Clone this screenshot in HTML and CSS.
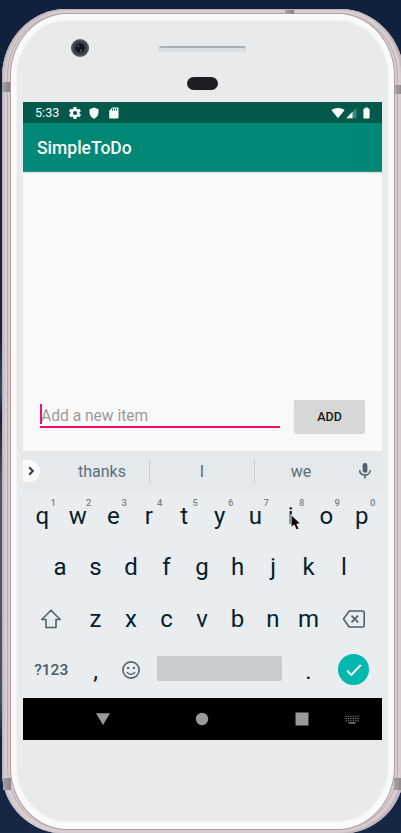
FILE: index.html
```html
<!DOCTYPE html>
<html lang="en">
<head>
<meta charset="utf-8">
<title>SimpleToDo</title>
<link rel="stylesheet" href="styles.css">
</head>
<body>
<div class="phone">
  <i class="band band-top"></i><i class="band band-l1"></i><i class="band band-r1"></i><i class="band band-l2"></i><i class="band band-r2"></i>
  <div class="rim">
  <div class="face">
    <div class="forehead">
      <svg class="camera" width="20" height="20" viewBox="0 0 20 20"><circle cx="10" cy="10" r="9" fill="#50535b"/><circle cx="10" cy="10" r="7" fill="#393c44"/><circle cx="10" cy="10" r="4.6" fill="#111419"/><circle cx="8.4" cy="8.2" r="1.3" fill="#343c49"/><path d="M10 11.5l2 .5-1 2.5z" fill="#77763a"/></svg>
      <div class="speaker"></div>
      <div class="sensor"></div>
    </div>
    <main class="screen">
      <div class="status">
        <span class="time">5:33</span>
        <svg class="s-gear" width="12" height="12" viewBox="2 2 20 20" fill="#fafafa"><path d="M19.4 13c0-.3.1-.7.1-1s0-.7-.1-1l2.1-1.7c.2-.1.2-.4.1-.6l-2-3.5c-.1-.2-.4-.3-.6-.2l-2.5 1a7 7 0 0 0-1.7-1l-.4-2.6c0-.3-.2-.4-.5-.4h-4c-.2 0-.4.1-.5.4L9 5a7 7 0 0 0-1.6 1L4.900 5c-.2-.1-.5 0-.6.2l-2 3.500c-.1.2-.1.500.1.600L4.500 11a8 8 0 0 0 0 2l-2.100 1.700c-.2.100-.2.400-.1.600l2 3.500c.1.200.4.300.6.200l2.500-1c.5.400 1.100.700 1.700 1l.4 2.600c0 .300.200.400.500.400h4c.2 0 .4-.1.500-.4l.4-2.600a7 7 0 0 0 1.700-1l2.500 1c.2.100.5 0 .6-.2l2-3.500c.1-.2.100-.5-.1-.6zM12 15.500a3.500 3.500 0 1 1 0-7 3.500 3.500 0 0 1 0 7z"/></svg>
        <svg class="s-shield" width="10" height="12" viewBox="0 0 10 12"><path d="M5 .4l4.500 1.800v3.300C9.500 8.400 7.600 10.800 5 11.700 2.400 10.800.500 8.400.500 5.500V2.200z" fill="#fafafa"/></svg>
        <svg class="s-card" width="10" height="12" viewBox="0 0 10 12"><path d="M3.300.5h5.200c.6 0 1 .4 1 1v9c0 .6-.4 1-1 1h-7.500c-.5 0-.8-.4-.8-1V3.700z" fill="#fafafa"/><path d="M3.500 1.500v2M5.500 1.500v2M7.500 1.500v2" stroke="#00594a"/></svg>
        <svg class="s-wifi" width="14" height="12" viewBox="0 0 14 12"><path d="M7 11.200L.3 3.100C4 .3 10 .3 13.700 3.100z" fill="#fafafa"/></svg>
        <svg class="s-cell" width="11" height="12" viewBox="0 0 11 12"><path d="M10.500.7v10.500H.3z" fill="#33897b"/><path d="M6.500 4.800v6.400H.3z" fill="#fafafa"/></svg>
        <svg class="s-batt" width="7" height="12" viewBox="0 0 7 12"><path d="M2.200.5h2.600v1h1c.5 0 .8.300.8.700v8.600c0 .4-.3.700-.8.700H1.200c-.4 0-.8-.3-.8-.7V2.200c0-.4.4-.7.800-.7h1z" fill="#fafafa"/></svg>
      </div>
      <header class="appbar">SimpleToDo</header>
      <section class="content">
        <div class="form">
          <div class="field"><span class="caret"></span>Add a new item</div>
          <button class="add">ADD</button>
        </div>
      </section>
      <div class="suggest">
        <span class="more"><svg width="18" height="22" viewBox="0 0 18 22"><path d="M6.500 7l4 4-4 4" fill="none" stroke="#263c47" stroke-width="2"/></svg></span>
        <span class="word w1">thanks</span>
        <span class="word w2">I</span>
        <span class="word w3">we</span>
        <svg class="mic" width="14" height="18" viewBox="0 0 14 18"><rect x="4.600" y="1" width="4.800" height="9.800" rx="2.400" fill="#4b606c"/><path d="M1.700 8c0 3.100 2.200 5 5.300 5s5.300-1.900 5.300-5M7 13v3.500" fill="none" stroke="#4b606c" stroke-width="1.500"/></svg>
      </div>
      <div class="keyboard">
        <div class="row r1">
          <span>q<sup>1</sup></span><span>w<sup>2</sup></span><span>e<sup>3</sup></span><span>r<sup>4</sup></span><span>t<sup>5</sup></span><span>y<sup>6</sup></span><span>u<sup>7</sup></span><span>i<sup>8</sup>
            <svg class="cursor" width="14" height="20" viewBox="0 0 14 20"><path d="M2 1.500v13.200l3-2.700 2.400 5 2.800-1.300L7.900 11H12z" fill="#0b0b0b" stroke="#fff" stroke-width="1"/></svg></span><span>o<sup>9</sup></span><span>p<sup>0</sup></span>
        </div>
        <div class="row r2"><span>a</span><span>s</span><span>d</span><span>f</span><span>g</span><span>h</span><span>j</span><span>k</span><span>l</span></div>
        <div class="row r3">
          <span><svg width="22" height="22" viewBox="0 0 22 22"><path d="M11 2.200L1.800 11.500h4.200v8h10v-8h4.200z" fill="none" stroke="#4e626d" stroke-width="1.600" stroke-linejoin="round"/></svg></span>
          <span>z</span><span>x</span><span>c</span><span>v</span><span>b</span><span>n</span><span>m</span>
          <span><svg class="del" width="24" height="20" viewBox="0 0 24 20"><path d="M7.200 2h13.600c.8 0 1.400.6 1.400 1.400v13.200c0 .8-.6 1.400-1.400 1.400H7.200L1.500 10z" fill="none" stroke="#4e626d" stroke-width="1.600" stroke-linejoin="round"/><path d="M9.500 6.700l6.600 6.600M16.100 6.700l-6.600 6.600" stroke="#4e626d" stroke-width="1.700"/></svg></span>
        </div>
        <div class="row r4">
          <span class="sym">?123</span><span class="punct">,</span>
          <span><svg width="20" height="20" viewBox="0 0 20 20"><circle cx="10" cy="10" r="8.100" fill="none" stroke="#4e626d" stroke-width="1.600"/><circle cx="7.100" cy="7.900" r="1.200" fill="#4e626d"/><circle cx="12.900" cy="7.900" r="1.200" fill="#4e626d"/><path d="M5.900 12c1.700 3 6.500 3 8.200 0" fill="none" stroke="#4e626d" stroke-width="1.500"/></svg></span>
          <span class="space"></span><span class="punct">.</span>
          <span class="done"><svg width="18" height="16" viewBox="0 0 18 16"><path d="M2 8.500l4.300 4.300L15.800 3" fill="none" stroke="#fff" stroke-width="1.900"/></svg></span>
        </div>
      </div>
      <nav class="nav">
        <svg width="16" height="14" viewBox="0 0 16 14"><path d="M1 1.200h14L8 13z" fill="#999"/></svg>
        <svg class="n-home" width="14" height="14" viewBox="0 0 14 14"><circle cx="7" cy="7" r="6.200" fill="#999"/></svg>
        <svg class="n-recent" width="14" height="14" viewBox="0 0 14 14"><rect x=".5" y=".5" width="13" height="13" rx=".6" fill="#999"/></svg>
        <svg class="n-ime" width="14" height="9" viewBox="0 0 14 9"><path d="M.5 1.200h13.500M.5 3.500h13.500M.5 5.700h13.500" stroke="#999" stroke-width="1.100" stroke-dasharray="1.200 1.200"/><path d="M3.500 7.900h7" stroke="#999" stroke-width="1.200"/></svg>
      </nav>
    </main>
  </div>
  </div>
</div>
</body>
</html>
```
FILE: styles.css
```css
* { box-sizing: border-box; }
html { overflow: hidden; }
body {
  margin: 0;
  width: 401px;
  height: 833px;
  padding: 9px 0 0 2px;
  overflow: hidden;
  font-family: Roboto, "Liberation Sans", sans-serif;
  background: linear-gradient(#11203c 0 40%, #34496a 47%, #14233f 50%, #46566f 58%, #42546b 84%, #0f2342 89%, #172746);
}
.phone {
  position: relative;
  width: 402px;
  height: 825px;
  padding: 5px 10px 5px 9px;
  border-radius: 64px 64px 64px 64px / 68px 68px 62px 62px;
  background: #d8cdd0;
  box-shadow: inset 1px 1px 0 #b9b1b5, inset 3px 1px 1px #cec4c8, inset -3px -1px 1px #c0b6ba;
}
.rim {
  height: 815px;
  border-radius: 56px / 62px;
  background: #fafafb;
  box-shadow: 0 0 0 1px #aaa0a5, -3px 0 0 0 #d8cdd1, 3px 0 0 0 #d8cdd1, -4px 0 0 0 #b9adb2, 4px 0 0 0 #b9adb2;
  padding: 7px 6px 8px;
}
.face {
  height: 800px;
  border-radius: 50px / 56px;
  background: #e8eaec;
  box-shadow: 0 0 2px 1px #eff1f2;
  padding: 0 6px;
}
.forehead {
  position: relative;
  height: 81px;
  display: flex;
  flex-direction: column;
  align-items: center;
  padding-top: 25px;
}
.camera { position: absolute; left: 47px; top: 17px; }
.speaker {
  width: 87px;
  height: 6px;
  border-top: 2px solid #a7b0b7;
  border-radius: 3px 3px 1px 1px;
  background: #dbdfe2;
}
.sensor { width: 31px; height: 13px; margin-top: 25px; border-radius: 7px; background: #1e1d21; }
.band { position: absolute; background: linear-gradient(90deg, #aaa3a5, #878284); }
.band-top { left: 283px; top: 1px; width: 9px; height: 4px; }
.band-l1 { left: 0; top: 73px; width: 8px; height: 10px; }
.band-r1 { left: 393px; top: 76px; width: 8px; height: 9px; }
.band-l2 { left: 1px; top: 769px; width: 8px; height: 12px; }
.band-r2 { left: 392px; top: 769px; width: 9px; height: 12px; }
.screen { width: 359px; display: flex; flex-direction: column; }
.status { height: 21px; background: #00594a; display: flex; align-items: center; padding: 1px 12px 0 12px; }
.time { width: 34px; font-size: 12.600px; line-height: 20px; color: #fafafa; }
.s-shield { margin-left: 8px; }
.s-card { margin-left: 10px; }
.s-wifi { margin-left: auto; }
.s-cell { margin-left: 1px; }
.s-batt { margin-left: 6px; }
.appbar { height: 49px; background: #008877; border-bottom: 1px solid #27937f; color: #fafafa; font-size: 17.500px; font-weight: 500; line-height: 51px; padding-left: 14px; }
.content { height: 279px; background: #f9f9f9; display: flex; flex-direction: column; justify-content: flex-end; box-shadow: inset 0 2px 1px -1px #d8d8d8; }
.form { display: flex; height: 51px; padding: 0 17px; }
.field { position: relative; width: 240px; height: 28px; border-bottom: 2px solid #e4156b; color: #9c9c9c; font-size: 15.600px; line-height: 32px; padding-left: 1px; }
.caret { position: absolute; left: 0; top: 4px; width: 2px; height: 20px; background: #e4156b; }
.add { width: 71px; height: 33px; margin-left: 14px; padding: 0; border: 0; border-radius: 2px; background: #d6d8d7; box-shadow: 0 1px 1px #dcd4d6; color: #151515; font: 500 12.500px/33px Roboto, sans-serif; }
.suggest { height: 40px; background: #e6e9eb; display: flex; align-items: center; color: #5b6e79; font-size: 16px; }
.more { width: 17px; height: 22px; background: #fafafa; border-radius: 0 11px 11px 0; display: flex; }
.word { text-align: center; line-height: 22px; padding-top: 2px; }
.w1 { width: 110px; padding-left: 14px; margin-right: -1px; }
.w2 { width: 106px; border-left: 1px solid #c9d1d5; border-right: 1px solid #c9d1d5; }
.w3 { width: 92px; }
.mic { margin-left: 11px; }
.keyboard { height: 207px; background: #e9edf0; color: #05202b; font-size: 24px; padding-right: 1px; }
.row { display: grid; justify-content: center; grid-auto-flow: column; grid-auto-columns: 35.500px; }
.row > span { position: relative; display: flex; align-items: center; justify-content: center; }
.r1 { height: 49px; }
.r2 { height: 53px; }
.r3 { height: 51px; grid-template-columns: 53px repeat(7, 35.500px) 53px; }
.r4 { height: 52px; grid-template-columns: 53px 35.500px 35.500px 142px 35.500px 53px; }
sup { position: absolute; left: 26px; top: 6px; color: #78858c; font-size: 9.500px; font-weight: 500; line-height: 11px; }
.cursor { position: absolute; left: 16px; top: 22px; }
.del { margin-left: 2px; margin-top: 1px; }
.sym { color: #465a65; font-size: 15.500px; font-weight: 500; }
.row .punct { padding-top: 2px; }
.row .space { width: 125px; height: 25px; margin: 12px auto auto; border-radius: 2px; background: #c7ccd0; }
.row .done { width: 31px; height: 31px; margin: 10px 10px auto 12px; border-radius: 50%; background: #00b8ad; }
.nav { height: 42px; padding-left: 72px; background: #000; display: flex; align-items: center; }
.n-home { margin-left: 84px; }
.n-recent { margin-left: 85.500px; }
.n-ime { margin-left: 36px; }
```
